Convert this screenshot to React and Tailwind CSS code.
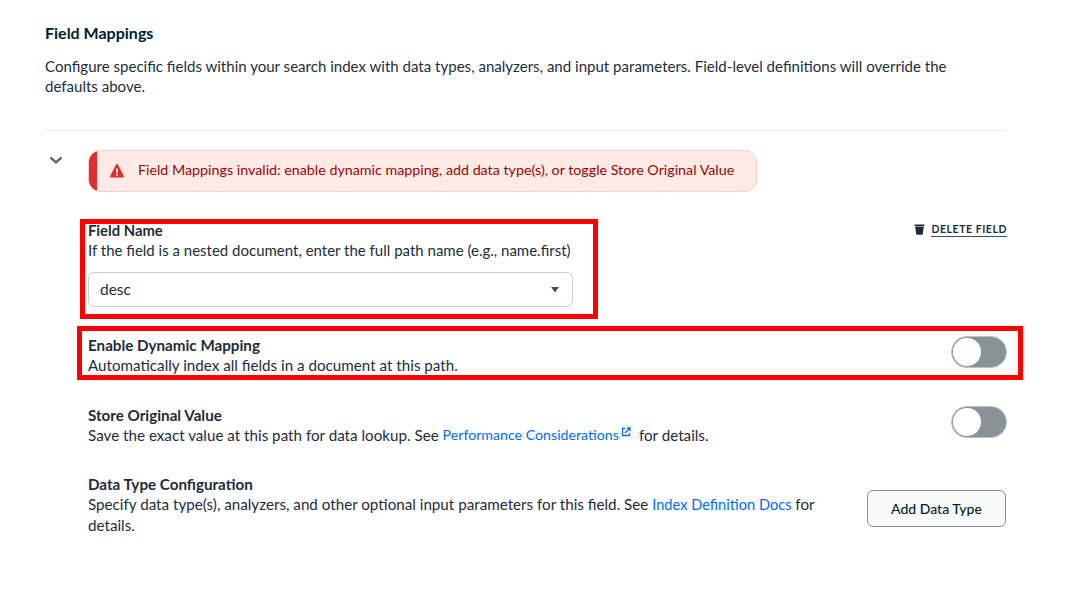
import React from 'react';

const Toggle = () => {
  return (
    <div className="w-[56px] h-[32px] mr-[-1px] rounded-full bg-[#889397] border border-[#b8c4c2] flex items-center pl-[1px] shrink-0">
      <div className="w-[28px] h-[28px] rounded-full bg-white"></div>
    </div>
  );
};

const App = () => {
  return (
    <div className="w-[1086px] h-[593px] bg-white overflow-hidden pl-[45px] pt-[23px] text-[#1c2d38] text-[15.2px] leading-[20px] font-['Lato','Noto_Sans',sans-serif]">
      <div className="w-[961px]">
        <h2 className="font-bold text-[16px] leading-[20px] text-[#001e2b]">Field Mappings</h2>
        <p className="mt-[13px] w-[925px] text-[15.05px]">
          Configure specific fields within your search index with data types, analyzers, and input parameters. Field-level definitions will override the defaults above.
        </p>
        <div className="mt-[34px] border-t border-[#e8edeb]"></div>

        <div className="flex mt-[19px]">
          <div className="w-[43px] shrink-0 pl-[4px] pt-[3px]">
            <svg width="14" height="14" viewBox="0 0 14 14" fill="none">
              <path d="M1.5 4.5 L7 9.5 L12.5 4.5" stroke="#5c6c75" strokeWidth="2.4" />
            </svg>
          </div>

          <div className="flex-1">
            <div className="w-[669px] h-[42px] rounded-[12px] border border-[#ffcdc7] bg-[#ffeae5] flex items-center overflow-hidden">
              <div className="w-[8px] h-full bg-[#db3030] shrink-0"></div>
              <svg className="ml-[12px] shrink-0" width="16" height="16" viewBox="0 0 16 16">
                <path fillRule="evenodd" clipRule="evenodd" d="M8.9 1.6a1 1 0 0 0-1.8 0L1.2 13a1 1 0 0 0 .9 1.5h11.8a1 1 0 0 0 .9-1.5L8.9 1.6ZM7.1 5.5h1.8v4.8H7.1V5.5Zm0 6h1.8v1.6H7.1v-1.6Z" fill="#db3030" />
              </svg>
              <span className="ml-[13px] mt-[-2px] text-[14.27px] text-[#970606] whitespace-nowrap">
                Field Mappings invalid: enable dynamic mapping, add data type(s), or toggle Store Original Value
              </span>
            </div>

            <div className="flex justify-between mt-[28px]">
              <div className="relative w-[485px]">
                <div className="absolute left-[-8px] top-[-1px] w-[518px] h-[100px] border-[5px] border-[#ff0000]"></div>
                <div className="font-bold text-[14.8px]">Field Name</div>
                <div className="whitespace-nowrap text-[15px]">If the field is a nested document, enter the full path name (e.g., name.first)</div>
                <div className="mt-[12px] h-[35px] rounded-[6px] border border-[#c9cfcf] flex items-center justify-between pl-[11px] pr-[12px]">
                  <span className="text-[15.5px] mt-[-2px]">desc</span>
                  <svg width="10" height="6" viewBox="0 0 10 6"><path d="M1 0h8L5 5.5Z" fill="#3d4f58" /></svg>
                </div>
              </div>
              <div className="flex items-center h-[18px] mr-[-1px] gap-[6px]">
                <svg width="11" height="12" viewBox="0 0 11 12">
                  <path d="M0.5 1.5h10v1.6h-10Z M1.2 3.6h8.6l-0.9 7.2a1 1 0 0 1-1 .9H3.1a1 1 0 0 1-1-.9Z" fill="#1c2d38" />
                </svg>
                <span className="font-bold text-[10.5px] tracking-[0.55px] leading-[14px] border-b border-[#3d4f58] text-[#1c2d38]">DELETE FIELD</span>
              </div>
            </div>

            <div className="relative flex justify-between items-start mt-[29px]">
              <div className="absolute left-[-11px] top-[-10px] w-[946px] h-[54px] border-[5px] border-[#ff0000]"></div>
              <div className="mt-[-1px] mb-[1px]">
                <div className="font-bold">Enable Dynamic Mapping</div>
                <div>Automatically index all fields in a document at this path.</div>
              </div>
              <Toggle />
            </div>

            <div className="flex justify-between items-start mt-[30px]">
              <div className="mt-[-1px] mb-[1px]">
                <div className="font-bold">Store Original Value</div>
                <div className="flex items-start">
                  <span>Save the exact value at this path for data lookup. See&nbsp;</span>
                  <span className="text-[#016bf8] text-[14.2px]">Performance Considerations</span>
                  <svg className="mt-[2px] ml-[2px]" width="10" height="10" viewBox="0 0 10 10" fill="none">
                    <path d="M4 1.5H1.5v7h7V6" stroke="#016bf8" strokeWidth="1.3" />
                    <path d="M4 6 L8.5 1.5 M5.8 1h3.2v3.2" stroke="#016bf8" strokeWidth="1.3" />
                  </svg>
                  <span className="ml-[8px]">for details.</span>
                </div>
              </div>
              <Toggle />
            </div>

            <div className="flex justify-between items-start mt-[29px]">
              <div className="w-[735px] mt-[-1px]">
                <div className="font-bold">Data Type Configuration</div>
                <div>
                  Specify data type(s), analyzers, and other optional input parameters for this field. See <span className="text-[#016bf8] text-[14.6px]">Index Definition Docs</span> for<br />details.
                </div>
              </div>
              <button className="w-[139px] h-[37px] mt-[15px] rounded-[6px] border border-[#889397] bg-[#f9fbfa] text-[14px] text-[#001e2b] font-medium">
                Add Data Type
              </button>
            </div>
          </div>
        </div>
      </div>
    </div>
  );
};

export default App;
